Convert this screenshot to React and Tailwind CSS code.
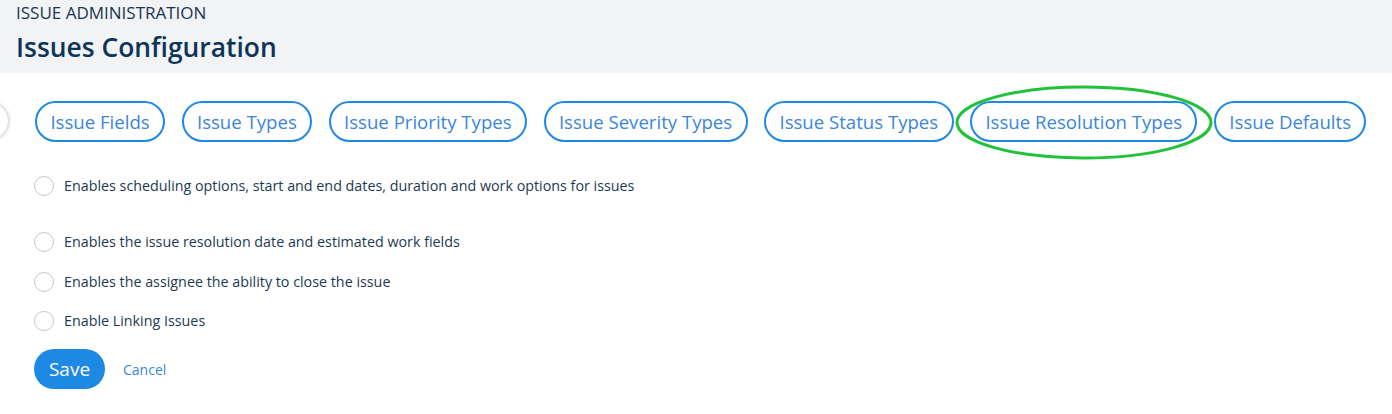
import { useState } from "react";

const tabs = [
  "Issue Fields",
  "Issue Types",
  "Issue Priority Types",
  "Issue Severity Types",
  "Issue Status Types",
  "Issue Resolution Types",
  "Issue Defaults",
];

const options = [
  { label: "Enables scheduling options, start and end dates, duration and work options for issues", gap: "mt-[34px]" },
  { label: "Enables the issue resolution date and estimated work fields", gap: "mt-[36px]" },
  { label: "Enables the assignee the ability to close the issue", gap: "mt-[20px]" },
  { label: "Enable Linking Issues", gap: "mt-[19px]" },
];

function Radio({ label, checked, onClick, className }) {
  return (
    <label className={`flex items-center gap-[10px] cursor-pointer ${className}`} onClick={onClick}>
      <span className="flex h-[20px] w-[20px] items-center justify-center rounded-full border border-[#c4c8cc] bg-white">
        {checked && <span className="h-[10px] w-[10px] rounded-full bg-[#1e88e5]" />}
      </span>
      <span className="text-[14.3px] leading-[20px] text-[#1d3a52]">{label}</span>
    </label>
  );
}

export default function App() {
  const [selected, setSelected] = useState([]);

  const toggle = (i) =>
    setSelected((s) => (s.includes(i) ? s.filter((x) => x !== i) : [...s, i]));

  return (
    <div className="relative h-[414px] w-[1392px] overflow-hidden bg-white font-['Open_Sans',sans-serif]">
      <div className="h-[73px] bg-[#f2f3f5] px-[16px] pt-[1px]">
        <div className="text-[17px] leading-[24px] text-[#1a3550]">ISSUE ADMINISTRATION</div>
        <div className="mt-[5px] text-[26.4px] font-semibold leading-[34px] text-[#0d3558]">
          Issues Configuration
        </div>
      </div>

      {/* partial scroll button on the left edge */}
      <div className="absolute left-[-28px] top-[103px] h-[36px] w-[36px] rounded-full bg-white shadow-[0_0_4px_rgba(0,0,0,0.35)]" />

      <div className="mt-[28px] flex gap-[16.5px] pl-[35px]">
        {tabs.map((t) => (
          <div key={t} className="relative">
            <button className="h-[41px] rounded-full border-2 border-[#1e88e5] px-[13.4px] text-[18.6px] leading-[24px] text-[#3b86da]">
              {t}
            </button>
            {t === "Issue Resolution Types" && (
              <svg
                className="pointer-events-none absolute left-[-15px] top-[-16px]"
                width="258"
                height="75"
                viewBox="0 0 258 75"
              >
                <ellipse cx="129" cy="37.5" rx="127" ry="35.5" fill="none" stroke="#22c13a" strokeWidth="3" />
              </svg>
            )}
          </div>
        ))}
      </div>

      <div className="pl-[34px]">
        {options.map((o, i) => (
          <Radio
            key={i}
            label={o.label}
            className={o.gap}
            checked={selected.includes(i)}
            onClick={() => toggle(i)}
          />
        ))}

        <div className="mt-[18px] flex items-center gap-[18px]">
          <button className="h-[40px] w-[71px] rounded-full bg-[#1e88e5] text-[19px] text-white">
            Save
          </button>
          <button className="text-[14px] text-[#3b86da]">Cancel</button>
        </div>
      </div>
    </div>
  );
}
